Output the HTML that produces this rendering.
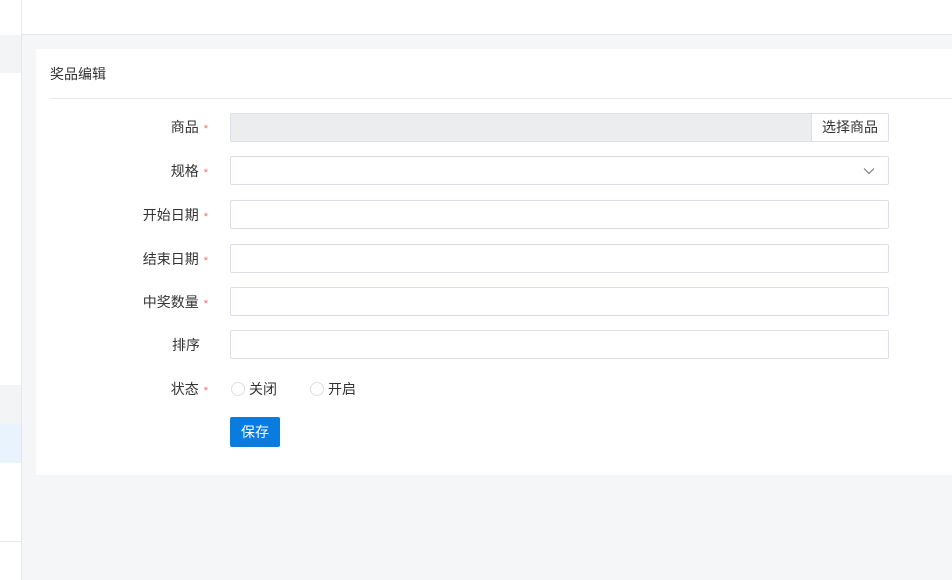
<!DOCTYPE html>
<html><head><meta charset="utf-8"><style>
*{box-sizing:border-box;margin:0;padding:0}
body{width:952px;height:580px;overflow:hidden;background:#f5f6f8;font-family:"Liberation Sans","Noto Sans CJK SC",sans-serif;font-size:14px;color:#333;position:relative}
.abs{position:absolute}
.side{left:0;top:0;width:22px;height:580px;background:#fff;border-right:1px solid #e8e8e8}
.top{left:22px;top:0;width:930px;height:35px;background:#fff;border-bottom:1px solid #e5e6e8}
.card{left:36px;top:49px;width:916px;height:426px;background:#fff}
.title{left:50px;top:64px;font-size:14px}
.hr{left:50px;top:98px;width:902px;height:1px;background:#e8e8e8}
.lbl{width:180px;left:28px;text-align:right;font-size:14px}
.lbl i{color:#f56c6c;font-style:normal;margin-left:5px;font-size:11px}
.inp{left:230px;width:659px;height:29px;border:1px solid #dcdfe6;border-radius:2px;background:#fff}
.radio{width:14px;height:14px;border:1px solid #dcdfe6;border-radius:50%}
</style></head><body>
<div class="abs side"></div>
<div class="abs" style="left:0;top:35px;width:21px;height:38px;background:#f3f4f6"></div>
<div class="abs" style="left:0;top:385px;width:21px;height:39px;background:#f3f4f6"></div>
<div class="abs" style="left:0;top:424px;width:21px;height:39px;background:#e8f3fd"></div>
<div class="abs" style="left:0;top:541px;width:21px;height:1px;background:#e8e8e8"></div>
<div class="abs top"></div>
<div class="abs card"></div>
<div class="abs title">奖品编辑</div>
<div class="abs hr"></div>

<div class="abs lbl" style="top:117px">商品<i>*</i></div>
<div class="abs inp" style="top:113px;background:#ecedef"></div>
<div class="abs" style="left:811px;top:113px;width:78px;height:29px;border:1px solid #dcdfe6;background:#fff;border-radius:0 2px 2px 0;text-align:center;line-height:27px">选择商品</div>

<div class="abs lbl" style="top:161px">规格<i>*</i></div>
<div class="abs inp" style="top:156px"></div>
<svg class="abs" style="left:863px;top:166px" width="12" height="10" viewBox="0 0 12 10"><path d="M1 2.5 L6 7.5 L11 2.5" fill="none" stroke="#777" stroke-width="1.1"/></svg>

<div class="abs lbl" style="top:205px">开始日期<i>*</i></div>
<div class="abs inp" style="top:200px"></div>
<div class="abs lbl" style="top:249px">结束日期<i>*</i></div>
<div class="abs inp" style="top:244px"></div>
<div class="abs lbl" style="top:292px">中奖数量<i>*</i></div>
<div class="abs inp" style="top:287px"></div>
<div class="abs lbl" style="top:335px;width:172px">排序</div>
<div class="abs inp" style="top:330px"></div>

<div class="abs lbl" style="top:379px">状态<i>*</i></div>
<div class="abs radio" style="left:231px;top:382px"></div>
<div class="abs" style="left:249px;top:379px">关闭</div>
<div class="abs radio" style="left:310px;top:382px"></div>
<div class="abs" style="left:328px;top:379px">开启</div>

<div class="abs" style="left:230px;top:417px;width:50px;height:30px;background:#0a7ce0;color:#fff;border-radius:2px;text-align:center;line-height:30px">保存</div>
</body></html>
